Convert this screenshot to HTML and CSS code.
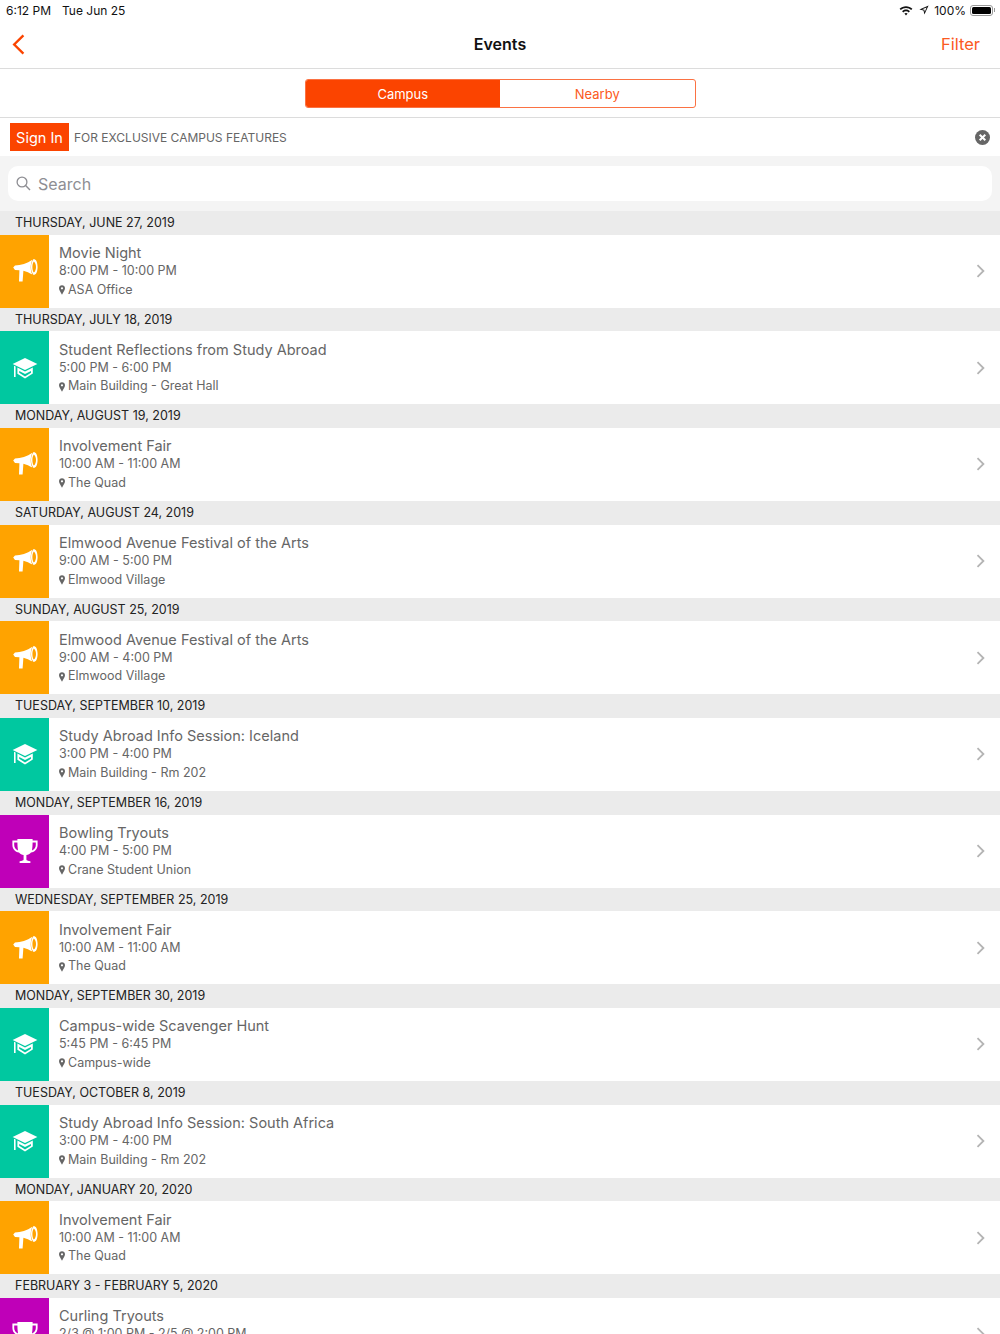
FILE: index.html
```html
<!DOCTYPE html>
<html lang="en">
<head>
<meta charset="utf-8">
<title>Events</title>
<link rel="stylesheet" href="styles.css">
</head>
<body>
<svg class="defs" width="0" height="0" aria-hidden="true">
<defs>
<symbol id="i-mega" viewBox="0 0 26 26">
<path d="M1.2 9.6 3 7.6 C9 7.4 15 5.6 20.4 1.8 C18.2 6 18.2 12.6 20.4 16.6 C17.4 14.8 14.4 13.4 11.4 12.7 L10.6 23.5 L7 23.5 L7.4 12.2 L3 11.9 Z"/>
<path fill-rule="evenodd" d="M21.6 1 C24.2 1 25.6 4.6 25.6 9 C25.6 13.4 24.2 17 21.6 17 C19.8 15 19 12 19 9 C19 6 19.8 3 21.6 1 Z M21.8 3.4 C20.8 4.8 20.4 7 20.4 9 C20.4 11 20.8 13.2 21.8 14.6 C23.2 13.6 24 11.4 24 9 C24 6.6 23.2 4.4 21.8 3.4 Z"/>
</symbol>
<symbol id="i-cap" viewBox="0 0 26 22">
<path d="M13 1 L25.4 7 L13 13 L.6 7 Z"/>
<path d="M2 8.8 L3.6 9.6 V20 H2 Z"/>
<path d="M5.4 10.6 L13 14.4 L20.8 10.6 V16.6 L13 21.6 L5.4 16.8 Z M7.2 14 V15.8 L13 19.4 L19 15.8 V14 L13 17 Z" fill-rule="evenodd"/>
</symbol>
<symbol id="i-cup" viewBox="0 0 26 26">
<path fill-rule="evenodd" d="M5.4 1 H20.6 V2.6 H25.6 V7 C25.6 11 22.8 14 19 14.6 C17.8 16 16.2 16.8 14.4 17 V21.6 C14.4 22.6 16 23 18.4 23.2 V25 H7.6 V23.2 C10 23 11.6 22.6 11.6 21.6 V17 C9.8 16.8 8.2 16 7 14.6 C3.2 14 .4 11 .4 7 V2.6 H5.4 Z M2.2 4.4 V7 C2.2 9.6 3.6 11.6 6 12.4 C5.6 9.6 5.4 7 5.4 4.4 Z M23.8 4.4 H20.6 C20.6 7 20.4 9.6 20 12.4 C22.4 11.6 23.8 9.6 23.8 7 Z"/>
</symbol>
<symbol id="i-pin" viewBox="0 0 7 11">
<path fill-rule="evenodd" d="M3.5 0 C5.5 0 7 1.5 7 3.5 C7 5.6 4.9 8.4 3.5 11 C2.1 8.4 0 5.6 0 3.5 C0 1.5 1.5 0 3.5 0 Z M3.5 2.2 A1.3 1.3 0 1 0 3.5 4.8 A1.3 1.3 0 1 0 3.5 2.2 Z"/>
</symbol>
<symbol id="i-chev" viewBox="0 0 9 14">
<path d="M1.5 1.2 L7.4 7 L1.5 12.8" fill="none" stroke="currentColor" stroke-width="1.8"/>
</symbol>
</defs>
</svg>

<header class="status">
<div class="status-left"><span>6:12 PM</span><span>Tue Jun 25</span></div>
<div class="status-right">
<svg class="wifi" width="14" height="11" viewBox="0 0 14 11"><path d="M7 1.2C9.4 1.2 11.7 2.1 13.4 3.7L12.2 5C10.8 3.7 9 3 7 3S3.2 3.7 1.8 5L.6 3.7C2.3 2.1 4.6 1.2 7 1.2ZM7 4.6C8.5 4.6 9.9 5.2 10.9 6.2L9.7 7.4C9 6.7 8 6.3 7 6.3S5 6.7 4.3 7.4L3.1 6.2C4.1 5.2 5.5 4.6 7 4.6ZM7 7.9C7.7 7.9 8.3 8.2 8.6 8.6L7 10.4L5.4 8.6C5.7 8.2 6.3 7.9 7 7.9Z"/></svg>
<svg class="loc" width="10" height="10" viewBox="0 0 10 10"><path d="M9.6.4 L5.4 9.6 L4.5 5.5 L.4 4.6 Z M7.6 2.4 L3.2 4.2 L5.3 4.7 L5.8 6.8 Z" fill-rule="evenodd"/></svg>
<span>100%</span>
<span class="battery"><span class="battery-fill"></span></span><span class="battery-cap"></span>
</div>
</header>

<nav class="navbar">
<svg class="back" width="13" height="21" viewBox="0 0 13 21"><path d="M11.4 1.4 L2.2 10.5 L11.4 19.6" fill="none" stroke="currentColor" stroke-width="2.4"/></svg>
<h1 class="nav-title">Events</h1>
<span class="nav-filter">Filter</span>
</nav>

<div class="segment-bar">
<div class="segment">
<span class="seg seg-on">Campus</span>
<span class="seg">Nearby</span>
</div>
</div>

<div class="signin">
<span class="signin-btn">Sign In</span>
<span class="signin-text">FOR EXCLUSIVE CAMPUS FEATURES</span>
<svg class="close" width="15" height="15" viewBox="0 0 15 15"><circle cx="7.5" cy="7.5" r="7.5" fill="#666"/><path d="M4.7 4.7 L10.3 10.3 M10.3 4.7 L4.7 10.3" stroke="#fff" stroke-width="2"/></svg>
</div>

<div class="search-bar">
<div class="search">
<svg class="search-icon" width="15" height="15" viewBox="0 0 15 15"><circle cx="6" cy="6" r="4.9" fill="none" stroke="#8e8e93" stroke-width="1.3"/><path d="M9.6 9.6 L14 14" stroke="#8e8e93" stroke-width="1.4"/></svg>
<span>Search</span>
</div>
</div>

<main class="list">
<h2 class="day">THURSDAY, JUNE 27, 2019</h2>
<a class="row"><span class="tile orange"><svg class="ic-mega"><use href="#i-mega"/></svg></span><span class="body"><span class="title">Movie Night</span><span class="time">8:00 PM - 10:00 PM</span><span class="place"><svg class="pin"><use href="#i-pin"/></svg>ASA Office</span></span><svg class="chev"><use href="#i-chev"/></svg></a>

<h2 class="day">THURSDAY, JULY 18, 2019</h2>
<a class="row"><span class="tile green"><svg class="ic-cap"><use href="#i-cap"/></svg></span><span class="body"><span class="title">Student Reflections from Study Abroad</span><span class="time">5:00 PM - 6:00 PM</span><span class="place"><svg class="pin"><use href="#i-pin"/></svg>Main Building - Great Hall</span></span><svg class="chev"><use href="#i-chev"/></svg></a>

<h2 class="day">MONDAY, AUGUST 19, 2019</h2>
<a class="row"><span class="tile orange"><svg class="ic-mega"><use href="#i-mega"/></svg></span><span class="body"><span class="title">Involvement Fair</span><span class="time">10:00 AM - 11:00 AM</span><span class="place"><svg class="pin"><use href="#i-pin"/></svg>The Quad</span></span><svg class="chev"><use href="#i-chev"/></svg></a>

<h2 class="day">SATURDAY, AUGUST 24, 2019</h2>
<a class="row"><span class="tile orange"><svg class="ic-mega"><use href="#i-mega"/></svg></span><span class="body"><span class="title">Elmwood Avenue Festival of the Arts</span><span class="time">9:00 AM - 5:00 PM</span><span class="place"><svg class="pin"><use href="#i-pin"/></svg>Elmwood Village</span></span><svg class="chev"><use href="#i-chev"/></svg></a>

<h2 class="day">SUNDAY, AUGUST 25, 2019</h2>
<a class="row"><span class="tile orange"><svg class="ic-mega"><use href="#i-mega"/></svg></span><span class="body"><span class="title">Elmwood Avenue Festival of the Arts</span><span class="time">9:00 AM - 4:00 PM</span><span class="place"><svg class="pin"><use href="#i-pin"/></svg>Elmwood Village</span></span><svg class="chev"><use href="#i-chev"/></svg></a>

<h2 class="day">TUESDAY, SEPTEMBER 10, 2019</h2>
<a class="row"><span class="tile green"><svg class="ic-cap"><use href="#i-cap"/></svg></span><span class="body"><span class="title">Study Abroad Info Session: Iceland</span><span class="time">3:00 PM - 4:00 PM</span><span class="place"><svg class="pin"><use href="#i-pin"/></svg>Main Building - Rm 202</span></span><svg class="chev"><use href="#i-chev"/></svg></a>

<h2 class="day">MONDAY, SEPTEMBER 16, 2019</h2>
<a class="row"><span class="tile purple"><svg class="ic-cup"><use href="#i-cup"/></svg></span><span class="body"><span class="title">Bowling Tryouts</span><span class="time">4:00 PM - 5:00 PM</span><span class="place"><svg class="pin"><use href="#i-pin"/></svg>Crane Student Union</span></span><svg class="chev"><use href="#i-chev"/></svg></a>

<h2 class="day">WEDNESDAY, SEPTEMBER 25, 2019</h2>
<a class="row"><span class="tile orange"><svg class="ic-mega"><use href="#i-mega"/></svg></span><span class="body"><span class="title">Involvement Fair</span><span class="time">10:00 AM - 11:00 AM</span><span class="place"><svg class="pin"><use href="#i-pin"/></svg>The Quad</span></span><svg class="chev"><use href="#i-chev"/></svg></a>

<h2 class="day">MONDAY, SEPTEMBER 30, 2019</h2>
<a class="row"><span class="tile green"><svg class="ic-cap"><use href="#i-cap"/></svg></span><span class="body"><span class="title">Campus-wide Scavenger Hunt</span><span class="time">5:45 PM - 6:45 PM</span><span class="place"><svg class="pin"><use href="#i-pin"/></svg>Campus-wide</span></span><svg class="chev"><use href="#i-chev"/></svg></a>

<h2 class="day">TUESDAY, OCTOBER 8, 2019</h2>
<a class="row"><span class="tile green"><svg class="ic-cap"><use href="#i-cap"/></svg></span><span class="body"><span class="title">Study Abroad Info Session: South Africa</span><span class="time">3:00 PM - 4:00 PM</span><span class="place"><svg class="pin"><use href="#i-pin"/></svg>Main Building - Rm 202</span></span><svg class="chev"><use href="#i-chev"/></svg></a>

<h2 class="day">MONDAY, JANUARY 20, 2020</h2>
<a class="row"><span class="tile orange"><svg class="ic-mega"><use href="#i-mega"/></svg></span><span class="body"><span class="title">Involvement Fair</span><span class="time">10:00 AM - 11:00 AM</span><span class="place"><svg class="pin"><use href="#i-pin"/></svg>The Quad</span></span><svg class="chev"><use href="#i-chev"/></svg></a>

<h2 class="day">FEBRUARY 3 - FEBRUARY 5, 2020</h2>
<a class="row"><span class="tile purple"><svg class="ic-cup"><use href="#i-cup"/></svg></span><span class="body"><span class="title">Curling Tryouts</span><span class="time">2/3 @ 1:00 PM - 2/5 @ 2:00 PM</span><span class="place"><svg class="pin"><use href="#i-pin"/></svg>Crane Student Union</span></span><svg class="chev"><use href="#i-chev"/></svg></a>
</main>
</body>
</html>
```

FILE: styles.css
```css
* { box-sizing: border-box; }
html, body { margin: 0; padding: 0; height: 1334px; overflow: hidden; }
body { background: #fff; font-family: Inter, "Noto Sans", sans-serif; color: #111; }
.defs { position: absolute; }

.status { height: 20px; display: flex; justify-content: space-between; align-items: center; padding: 0 5px 0 6px; font-size: 12px; color: #111; }
.status-left { display: flex; gap: 11px; }
.status-right { display: flex; align-items: center; }
.wifi { margin-right: 6px; fill: #111; }
.loc { margin-right: 5px; fill: #111; }
.battery { width: 23px; height: 11px; border: 1px solid #999; border-radius: 3px; padding: 1px; margin-left: 4px; display: flex; }
.battery-fill { flex: 1; background: #000; border-radius: 1.5px; }
.battery-cap { width: 1.5px; height: 4px; background: #999; margin-left: .5px; }

.navbar { height: 49px; border-bottom: 1px solid #dcdcdc; display: flex; align-items: center; justify-content: space-between; padding: 0 20px 0 12px; position: relative; }
.back { color: #fb4400; }
.nav-title { margin: 0; font-size: 16px; font-weight: 600; color: #111; position: absolute; left: 0; right: 0; text-align: center; }
.nav-filter { font-size: 16.5px; color: #fb5a22; position: relative; }

.segment-bar { height: 49px; border-bottom: 1px solid #dcdcdc; display: flex; justify-content: center; padding-top: 10px; }
.segment { width: 391px; height: 29px; display: flex; border: 1px solid #fb7243; border-radius: 3px; overflow: hidden; font-size: 13px; }
.seg { flex: 1; display: flex; align-items: center; justify-content: center; color: #fb5a22; }
.seg-on { background: #fb4400; color: #fff; }

.signin { height: 38px; display: flex; align-items: center; padding: 0 10px; }
.signin-btn { width: 59px; height: 28px; background: #fb4400; color: #fff; font-size: 14.5px; display: flex; align-items: center; justify-content: center; margin-right: 5px; }
.signin-text { flex: 1; font-size: 12px; color: #666; }

.search-bar { height: 55px; background: #f4f4f4; padding: 10px 8px; }
.search { height: 35px; background: #fff; border-radius: 10px; display: flex; align-items: center; padding-left: 8px; gap: 7px; font-size: 16px; color: #8e8e93; }

.list { display: block; }
.day { margin: 0; height: 23.67px; background: #ebebeb; font-size: 12.5px; font-weight: 400; line-height: 23.67px; padding-left: 15px; color: #222; }
.row { height: 73px; display: flex; align-items: center; background: #fff; }
.tile { width: 49px; height: 73px; flex: none; display: flex; align-items: center; justify-content: center; fill: #fff; }
.orange { background: #ffa300; }
.green { background: #00c8a0; }
.purple { background: #bf00b8; }
.ic-mega { width: 26px; height: 26px; }
.ic-cap { width: 26px; height: 22px; }
.ic-cup { width: 26px; height: 26px; }
.body { flex: 1; display: flex; flex-direction: column; padding-left: 10px; color: #666; }
.title { font-size: 14.5px; line-height: 19px; }
.time, .place { font-size: 12.5px; line-height: 18.5px; display: flex; align-items: center; }
.pin { width: 6px; height: 10px; margin-right: 3px; fill: #666; }
.chev { width: 9px; height: 14px; margin-right: 15px; color: #b4b4b4; flex: none; }
```
